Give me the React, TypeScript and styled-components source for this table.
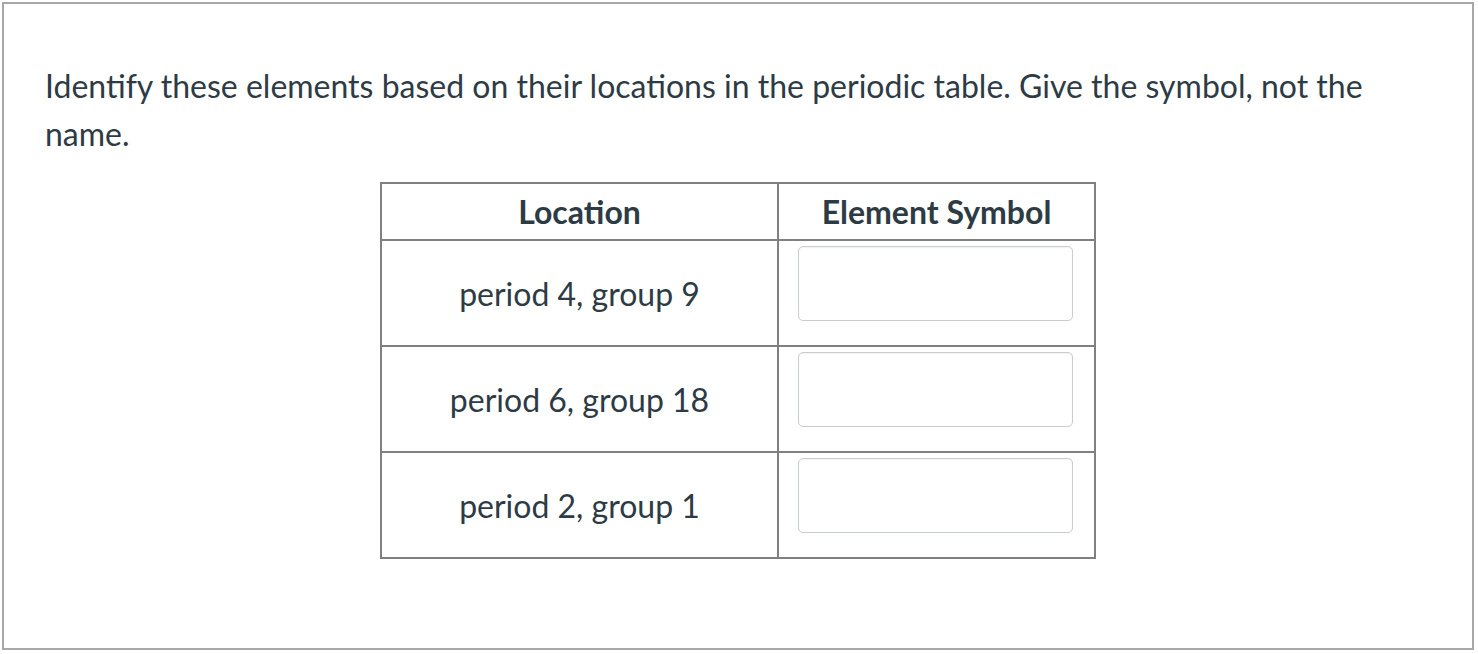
import React from 'react';
import styled, { createGlobalStyle } from 'styled-components';

const GlobalStyle = createGlobalStyle`
  html, body {
    margin: 0;
    padding: 0;
    background: #ffffff;
  }
  body {
    font-family: Lato, "Open Sans", "Liberation Sans", sans-serif;
    color: #2d3b45;
  }
`;

const Frame = styled.div`
  box-sizing: border-box;
  margin: 2px;
  width: 1472px;
  height: 648px;
  border: 2px solid #a8a8a8;
  padding: 58px 41px 0;
`;

const Prompt = styled.p`
  margin: 0 0 24px;
  font-size: 32px;
  line-height: 48px;
`;

const Table = styled.table`
  border-collapse: collapse;
  margin: 0 auto;
  width: 716px;
`;

const HeadCell = styled.th`
  border: 2px solid #808080;
  height: 55px;
  padding: 0;
  font-size: 32px;
  font-weight: 700;
  text-align: center;
  vertical-align: middle;
`;

const Cell = styled.td<{ $wide?: boolean }>`
  border: 2px solid #808080;
  height: 104px;
  padding: 0;
  width: ${(p) => (p.$wide ? '395px' : 'auto')};
  font-size: 32px;
  text-align: center;
  vertical-align: middle;
`;

const AnswerCell = styled.td`
  border: 2px solid #808080;
  height: 100px;
  padding: 4px 19px 0 19px;
  vertical-align: top;
`;

const Answer = styled.input`
  box-sizing: border-box;
  display: block;
  width: 275px;
  height: 75px;
  margin-top: 1px;
  border: 1px solid #c7cdd1;
  border-radius: 5px;
  background: #ffffff;
  box-shadow: inset 0 1px 2px rgba(0, 0, 0, 0.06);
  font-size: 20px;
  font-family: inherit;
  outline: none;
`;

const rows = ['period 4, group 9', 'period 6, group 18', 'period 2, group 1'];

export default function App() {
  return (
    <>
      <GlobalStyle />
      <Frame>
        <Prompt>
          Identify these elements based on their locations in the periodic table. Give the symbol, not the name.
        </Prompt>
        <Table>
          <thead>
            <tr>
              <HeadCell>Location</HeadCell>
              <HeadCell>Element Symbol</HeadCell>
            </tr>
          </thead>
          <tbody>
            {rows.map((label) => (
              <tr key={label}>
                <Cell $wide>{label}</Cell>
                <AnswerCell>
                  <Answer type="text" aria-label={`Symbol for ${label}`} />
                </AnswerCell>
              </tr>
            ))}
          </tbody>
        </Table>
      </Frame>
    </>
  );
}
